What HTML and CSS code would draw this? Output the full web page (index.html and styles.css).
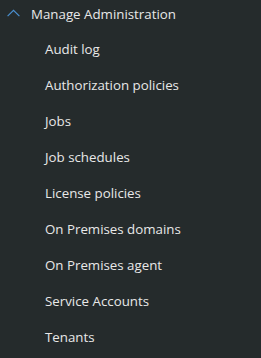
FILE: index.html
```html
<!DOCTYPE html>
<html>
<head>
<meta charset="utf-8">
<link rel="stylesheet" href="styles.css">
</head>
<body>
<nav class="menu">
  <div class="group-header">
    <svg class="chevron" width="13" height="8" viewBox="0 0 13 8"><path d="M0.6 7.2 L6.5 1.3 L12.4 7.2" fill="none" stroke="#4a90d0" stroke-width="1.2"/></svg>
    <span class="group-title">Manage Administration</span>
  </div>
  <ul class="items">
    <li>Audit log</li>
    <li>Authorization policies</li>
    <li>Jobs</li>
    <li>Job schedules</li>
    <li>License policies</li>
    <li>On Premises domains</li>
    <li>On Premises agent</li>
    <li>Service Accounts</li>
    <li>Tenants</li>
  </ul>
</nav>
</body>
</html>
```
FILE: styles.css
```css
html, body {
  margin: 0;
  padding: 0;
  background: #252b2c;
}
body {
  font-family: "Open Sans", "Noto Sans", sans-serif;
  font-size: 13.3px;
  color: #e8e8e8;
  width: 261px;
  height: 358px;
  overflow: hidden;
}
.menu {
  display: flex;
  flex-direction: column;
}
.group-header {
  display: flex;
  align-items: center;
  height: 27px;
  padding-left: 7px;
  gap: 11px;
}
.chevron {
  display: block;
  margin-top: -1px;
}
.items {
  list-style: none;
  margin: 0;
  padding: 4px 0 0;
}
.items li {
  height: 36px;
  line-height: 36px;
  padding-left: 45px;
}
```
